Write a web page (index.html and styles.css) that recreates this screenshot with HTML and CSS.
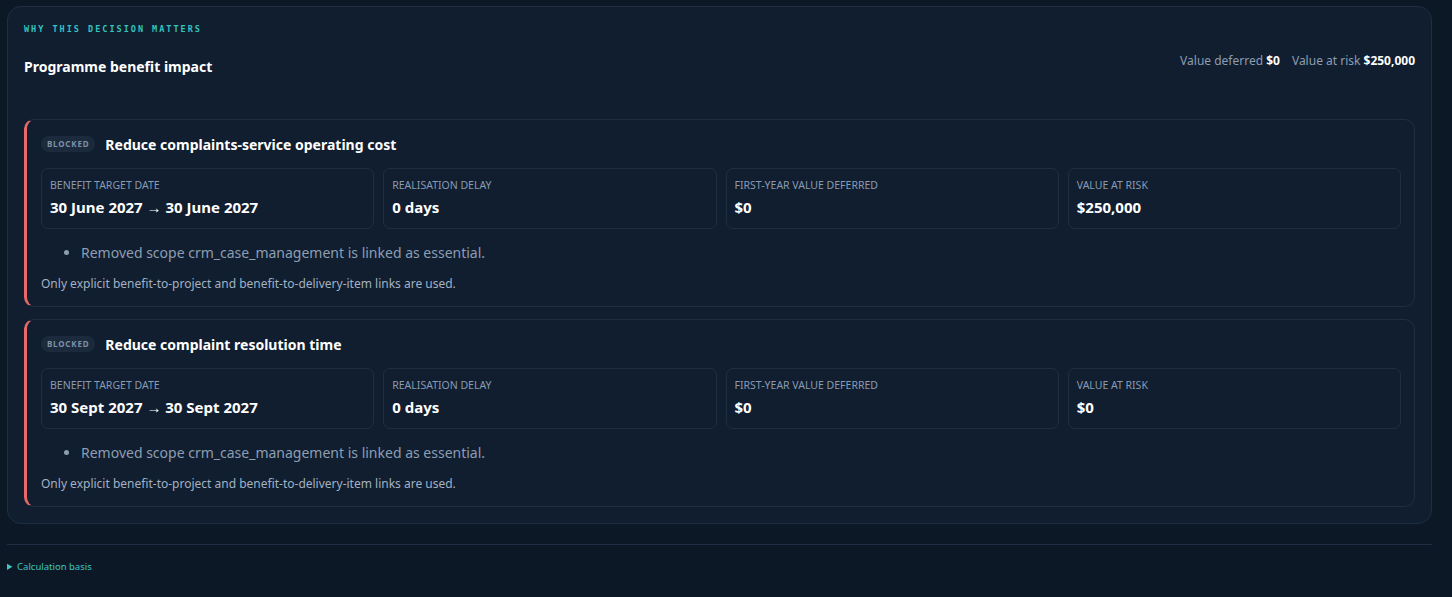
FILE: index.html
```html
<!DOCTYPE html>
<html lang="en">
<head>
<meta charset="utf-8">
<title>Programme benefit impact</title>
<link rel="stylesheet" href="styles.css">
</head>
<body>
<div class="page">
  <section class="panel">
    <div class="eyebrow">WHY THIS DECISION MATTERS</div>
    <div class="panel-head">
      <h2 class="panel-title">Programme benefit impact</h2>
      <div class="totals">
        <span>Value deferred <b>$0</b></span>
        <span>Value at risk <b>$250,000</b></span>
      </div>
    </div>

    <div class="benefits">
      <article class="benefit">
        <div class="benefit-head">
          <span class="badge">BLOCKED</span>
          <h3 class="benefit-title">Reduce complaints-service operating cost</h3>
        </div>
        <div class="metrics">
          <div class="metric"><div class="m-label">BENEFIT TARGET DATE</div><div class="m-value">30 June 2027 → 30 June 2027</div></div>
          <div class="metric"><div class="m-label">REALISATION DELAY</div><div class="m-value">0 days</div></div>
          <div class="metric"><div class="m-label">FIRST-YEAR VALUE DEFERRED</div><div class="m-value">$0</div></div>
          <div class="metric"><div class="m-label">VALUE AT RISK</div><div class="m-value">$250,000</div></div>
        </div>
        <ul class="reasons">
          <li>Removed scope crm_case_management is linked as essential.</li>
        </ul>
        <p class="note">Only explicit benefit-to-project and benefit-to-delivery-item links are used.</p>
      </article>

      <article class="benefit">
        <div class="benefit-head">
          <span class="badge">BLOCKED</span>
          <h3 class="benefit-title">Reduce complaint resolution time</h3>
        </div>
        <div class="metrics">
          <div class="metric"><div class="m-label">BENEFIT TARGET DATE</div><div class="m-value">30 Sept 2027 → 30 Sept 2027</div></div>
          <div class="metric"><div class="m-label">REALISATION DELAY</div><div class="m-value">0 days</div></div>
          <div class="metric"><div class="m-label">FIRST-YEAR VALUE DEFERRED</div><div class="m-value">$0</div></div>
          <div class="metric"><div class="m-label">VALUE AT RISK</div><div class="m-value">$0</div></div>
        </div>
        <ul class="reasons">
          <li>Removed scope crm_case_management is linked as essential.</li>
        </ul>
        <p class="note">Only explicit benefit-to-project and benefit-to-delivery-item links are used.</p>
      </article>
    </div>
  </section>

  <div class="divider"></div>

  <details class="basis">
    <summary>Calculation basis</summary>
  </details>
</div>
</body>
</html>
```

FILE: styles.css
```css
* { box-sizing: border-box; }

html, body {
  margin: 0;
  padding: 0;
  background: #0d1826;
  height: 100%;
}

body {
  font-family: "Noto Sans", "Open Sans", sans-serif;
  color: #e8eef6;
}

.page {
  padding: 6px 20px 0 7px;
}

.panel {
  background: #101e30;
  border: 1px solid #1f2e42;
  border-radius: 14px;
  padding: 16px 16px 16px 16px;
}

.eyebrow {
  font-family: "DejaVu Sans Mono", "Liberation Mono", monospace;
  font-size: 8.5px;
  font-weight: bold;
  letter-spacing: 2px;
  color: #35c3bf;
  line-height: 12px;
}

.panel-head {
  display: flex;
  justify-content: space-between;
  align-items: flex-start;
  margin-top: 16px;
  height: 68px;
}

.panel-title {
  margin: 6px 0 0 0;
  font-size: 14px;
  font-weight: 700;
  color: #ffffff;
  line-height: 20px;
}

.totals {
  display: flex;
  gap: 12px;
  font-size: 12px;
  color: #8d9db2;
  line-height: 16px;
  margin-top: 2px;
}

.totals b {
  color: #ffffff;
  font-weight: 700;
}

.benefits {
  display: flex;
  flex-direction: column;
  gap: 12px;
}

.benefit {
  background: #101e30;
  border: 1px solid #1f2e42;
  border-left: 3px solid #e8696a;
  border-radius: 10px;
  padding: 13px 13px 14px 14px;
}

.benefit-head {
  display: flex;
  align-items: center;
  gap: 10px;
  height: 22px;
}

.badge {
  font-size: 8px;
  font-weight: 700;
  letter-spacing: 0.8px;
  color: #8190a5;
  background: #1b2a3d;
  border-radius: 8px;
  padding: 3px 6px;
  line-height: 10px;
}

.benefit-title {
  margin: 0;
  font-size: 14px;
  font-weight: 700;
  color: #ffffff;
}

.metrics {
  display: grid;
  grid-template-columns: repeat(4, 1fr);
  gap: 9px;
  margin-top: 13px;
}

.metric {
  border: 1px solid #1f2e42;
  border-radius: 7px;
  padding: 9px 8px 8px 8px;
  height: 61px;
}

.m-label {
  font-size: 10.5px;
  color: #8a9ab0;
  line-height: 14px;
}

.m-value {
  font-size: 15px;
  font-weight: 700;
  color: #ffffff;
  margin-top: 6px;
  line-height: 19px;
}

.reasons {
  margin: 13px 0 0 0;
  padding-left: 40px;
  font-size: 14px;
  color: #8d9db2;
  line-height: 22px;
}

.note {
  margin: 12px 0 0 0;
  font-size: 12px;
  color: #a3b1c2;
  line-height: 16px;
}

.divider {
  height: 1px;
  background: #1f2e42;
  margin-top: 20px;
}

.basis {
  margin-top: 15px;
  font-size: 9.5px;
  color: #3ec6c2;
}

.basis summary {
  cursor: pointer;
  line-height: 14px;
}
```
